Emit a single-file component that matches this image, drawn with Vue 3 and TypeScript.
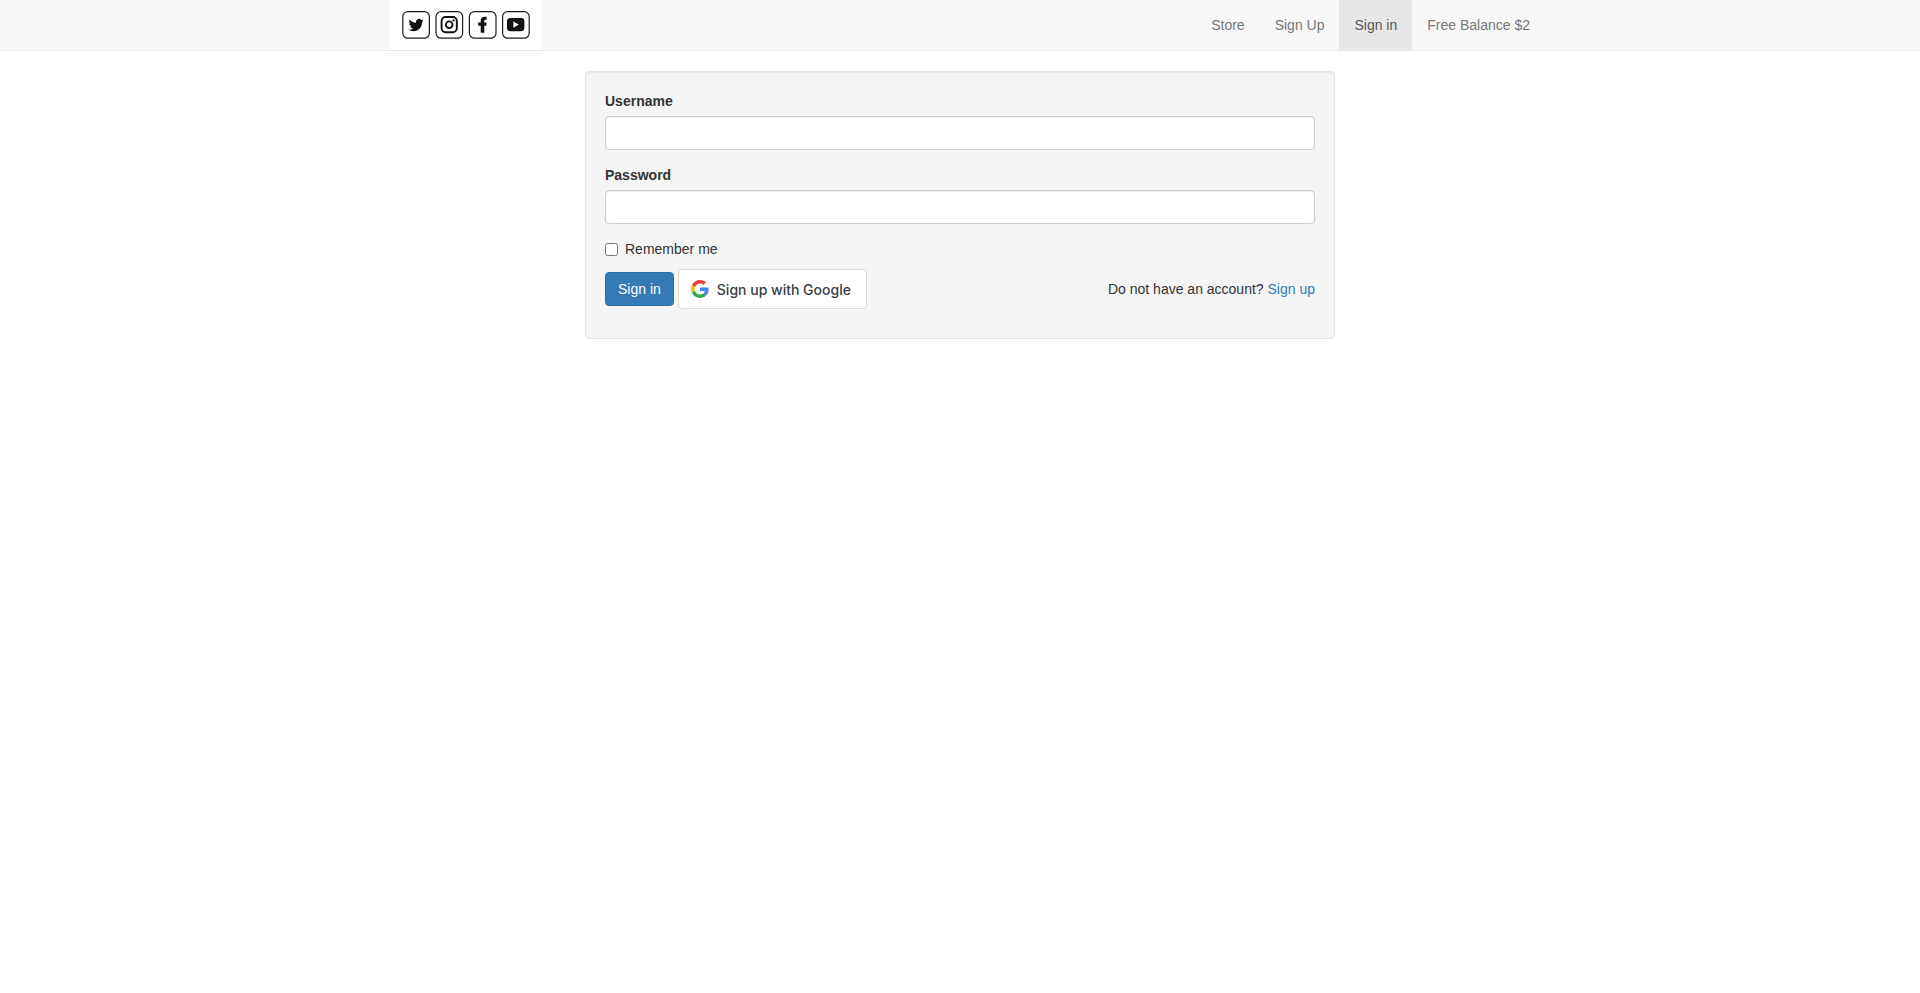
<script setup lang="ts">
import { ref } from 'vue'

interface NavItem {
  label: string
  active: boolean
}

const navItems: NavItem[] = [
  { label: 'Store', active: false },
  { label: 'Sign Up', active: false },
  { label: 'Sign in', active: true },
  { label: 'Free Balance $2', active: false },
]

const username = ref('')
const password = ref('')
const remember = ref(false)
</script>

<template>
  <div class="page">
    <nav class="navbar">
      <div class="container">
        <a class="brand" href="#" aria-label="Home">
          <svg width="151" height="50" viewBox="0 0 151 50" aria-hidden="true">
            <rect width="151" height="50" fill="#fff" />
            <g fill="none" stroke="#1c1c1c" stroke-width="1.2">
              <rect x="12.8" y="11.6" width="26.6" height="26.6" rx="5" />
              <rect x="46" y="11.6" width="26.6" height="26.6" rx="5" />
              <rect x="79.4" y="11.6" width="26.6" height="26.6" rx="5" />
              <rect x="112.6" y="11.6" width="26.6" height="26.6" rx="5" />
            </g>
            <path
              fill="#111"
              transform="translate(18.5 17.5) scale(0.63)"
              d="M23.953 4.57a10 10 0 01-2.825.775 4.958 4.958 0 002.163-2.723c-.951.555-2.005.959-3.127 1.184a4.92 4.92 0 00-8.384 4.482C7.69 8.095 4.067 6.13 1.64 3.162a4.822 4.822 0 00-.666 2.475c0 1.71.87 3.213 2.188 4.096a4.904 4.904 0 01-2.228-.616v.06a4.923 4.923 0 003.946 4.827 4.996 4.996 0 01-2.212.085 4.936 4.936 0 004.604 3.417 9.867 9.867 0 01-6.102 2.105c-.39 0-.779-.023-1.17-.067a13.995 13.995 0 007.557 2.209c9.053 0 13.998-7.496 13.998-13.985 0-.21 0-.42-.015-.63A9.935 9.935 0 0024 4.59z"
            />
            <g fill="none" stroke="#111" stroke-width="1.9">
              <rect x="51.6" y="17" width="15.2" height="15.2" rx="4" />
              <circle cx="59.2" cy="24.7" r="3.3" />
            </g>
            <circle cx="63.6" cy="20.4" r="1.1" fill="#111" />
            <path
              fill="#111"
              d="M90.7 32.8v-7.1h-2.5v-3.2h2.5v-1.6c0-2.8 1.5-4.2 4-4.2h2v3.1h-1.2c-.9 0-1.2.5-1.2 1.3v1.4h2.4l-.4 3.2h-2v7.1z"
            />
            <rect x="117" y="18" width="17.4" height="13.2" rx="3.4" fill="#111" />
            <path d="M123.4 21.5v6.2l5.4-3.1z" fill="#fff" />
          </svg>
        </a>
        <ul class="nav">
          <li v-for="item in navItems" :key="item.label">
            <a href="#" :class="{ active: item.active }">{{ item.label }}</a>
          </li>
        </ul>
      </div>
    </nav>

    <main class="main">
      <form class="well" @submit.prevent>
        <div class="group">
          <label for="username">Username</label>
          <input id="username" v-model="username" class="control" type="text" />
        </div>
        <div class="group">
          <label for="password">Password</label>
          <input id="password" v-model="password" class="control" type="password" />
        </div>
        <div class="remember">
          <input id="remember" v-model="remember" type="checkbox" />
          <label for="remember">Remember me</label>
        </div>
        <div class="actions">
          <button class="submit" type="submit">Sign in</button>
          <button class="google" type="button">
            <svg width="18" height="18" viewBox="0 0 48 48" aria-hidden="true">
              <path fill="#EA4335" d="M24 9.5c3.54 0 6.71 1.22 9.21 3.6l6.85-6.85C35.9 2.38 30.47 0 24 0 14.62 0 6.51 5.38 2.56 13.22l7.98 6.19C12.43 13.72 17.74 9.5 24 9.5z" />
              <path fill="#4285F4" d="M46.98 24.55c0-1.57-.15-3.09-.38-4.55H24v9.02h12.94c-.58 2.96-2.26 5.48-4.78 7.18l7.73 6c4.51-4.18 7.09-10.36 7.09-17.65z" />
              <path fill="#FBBC05" d="M10.53 28.59c-.48-1.45-.76-2.99-.76-4.59s.27-3.14.76-4.59l-7.98-6.19C.92 16.46 0 20.12 0 24c0 3.88.92 7.54 2.56 10.78l7.97-6.19z" />
              <path fill="#34A853" d="M24 48c6.48 0 11.93-2.13 15.89-5.81l-7.73-6c-2.15 1.45-4.92 2.3-8.16 2.3-6.26 0-11.57-4.22-13.47-9.91l-7.98 6.19C6.51 42.62 14.62 48 24 48z" />
            </svg>
            <span>Sign up with Google</span>
          </button>
          <p class="signup">Do not have an account? <a href="#">Sign up</a></p>
        </div>
      </form>
    </main>
  </div>
</template>

<style scoped>
.page {
  color: #333;
  font-family: "Liberation Sans", Arial, sans-serif;
  font-size: 14px;
  line-height: 20px;
}
.page *,
.page *::before {
  box-sizing: border-box;
}
a {
  color: #337ab7;
  text-decoration: none;
}
.navbar {
  background: #f8f8f8;
  border-bottom: 1px solid #e7e7e7;
  margin-bottom: 20px;
}
.container {
  display: flex;
  justify-content: space-between;
  max-width: 1170px;
  margin: 0 auto;
  padding-left: 15px;
}
.brand svg {
  display: block;
}
.nav {
  display: flex;
  list-style: none;
  margin: 0;
  padding: 0;
}
.nav a {
  display: block;
  padding: 15px;
  color: #777;
}
.nav a.active {
  background: #e7e7e7;
  color: #555;
}
.well {
  max-width: 750px;
  margin: 0 auto;
  padding: 19px;
  background: #f5f5f5;
  border: 1px solid #e3e3e3;
  border-radius: 4px;
  box-shadow: inset 0 1px 1px rgba(0, 0, 0, 0.05);
}
.group {
  margin-bottom: 15px;
}
.group label {
  display: block;
  margin-bottom: 5px;
  font-weight: 700;
}
.control {
  display: block;
  width: 100%;
  height: 34px;
  padding: 6px 12px;
  font: inherit;
  color: #555;
  background: #fff;
  border: 1px solid #ccc;
  border-radius: 4px;
  box-shadow: inset 0 1px 1px rgba(0, 0, 0, 0.075);
}
.remember {
  display: flex;
  align-items: center;
  gap: 7px;
  margin-bottom: 10px;
}
.remember input {
  width: 13px;
  height: 13px;
  margin: 1px 0 0;
}
.actions {
  display: flex;
  align-items: center;
  gap: 4px;
  margin-bottom: 10px;
}
.submit {
  height: 34px;
  padding: 6px 12px;
  font: inherit;
  color: #fff;
  background: #337ab7;
  border: 1px solid #2e6da4;
  border-radius: 4px;
}
.google {
  display: flex;
  align-items: center;
  gap: 8px;
  min-width: 189px;
  height: 40px;
  padding: 0 12px;
  font-family: Inter, Roboto, "Liberation Sans", sans-serif;
  font-size: 14px;
  font-weight: 500;
  color: #3c4043;
  background: #fff;
  border: 1px solid #dadce0;
  border-radius: 4px;
}
.signup {
  margin: 0 0 0 auto;
}
</style>

<style>
body {
  margin: 0;
  background: #fff;
}
</style>
